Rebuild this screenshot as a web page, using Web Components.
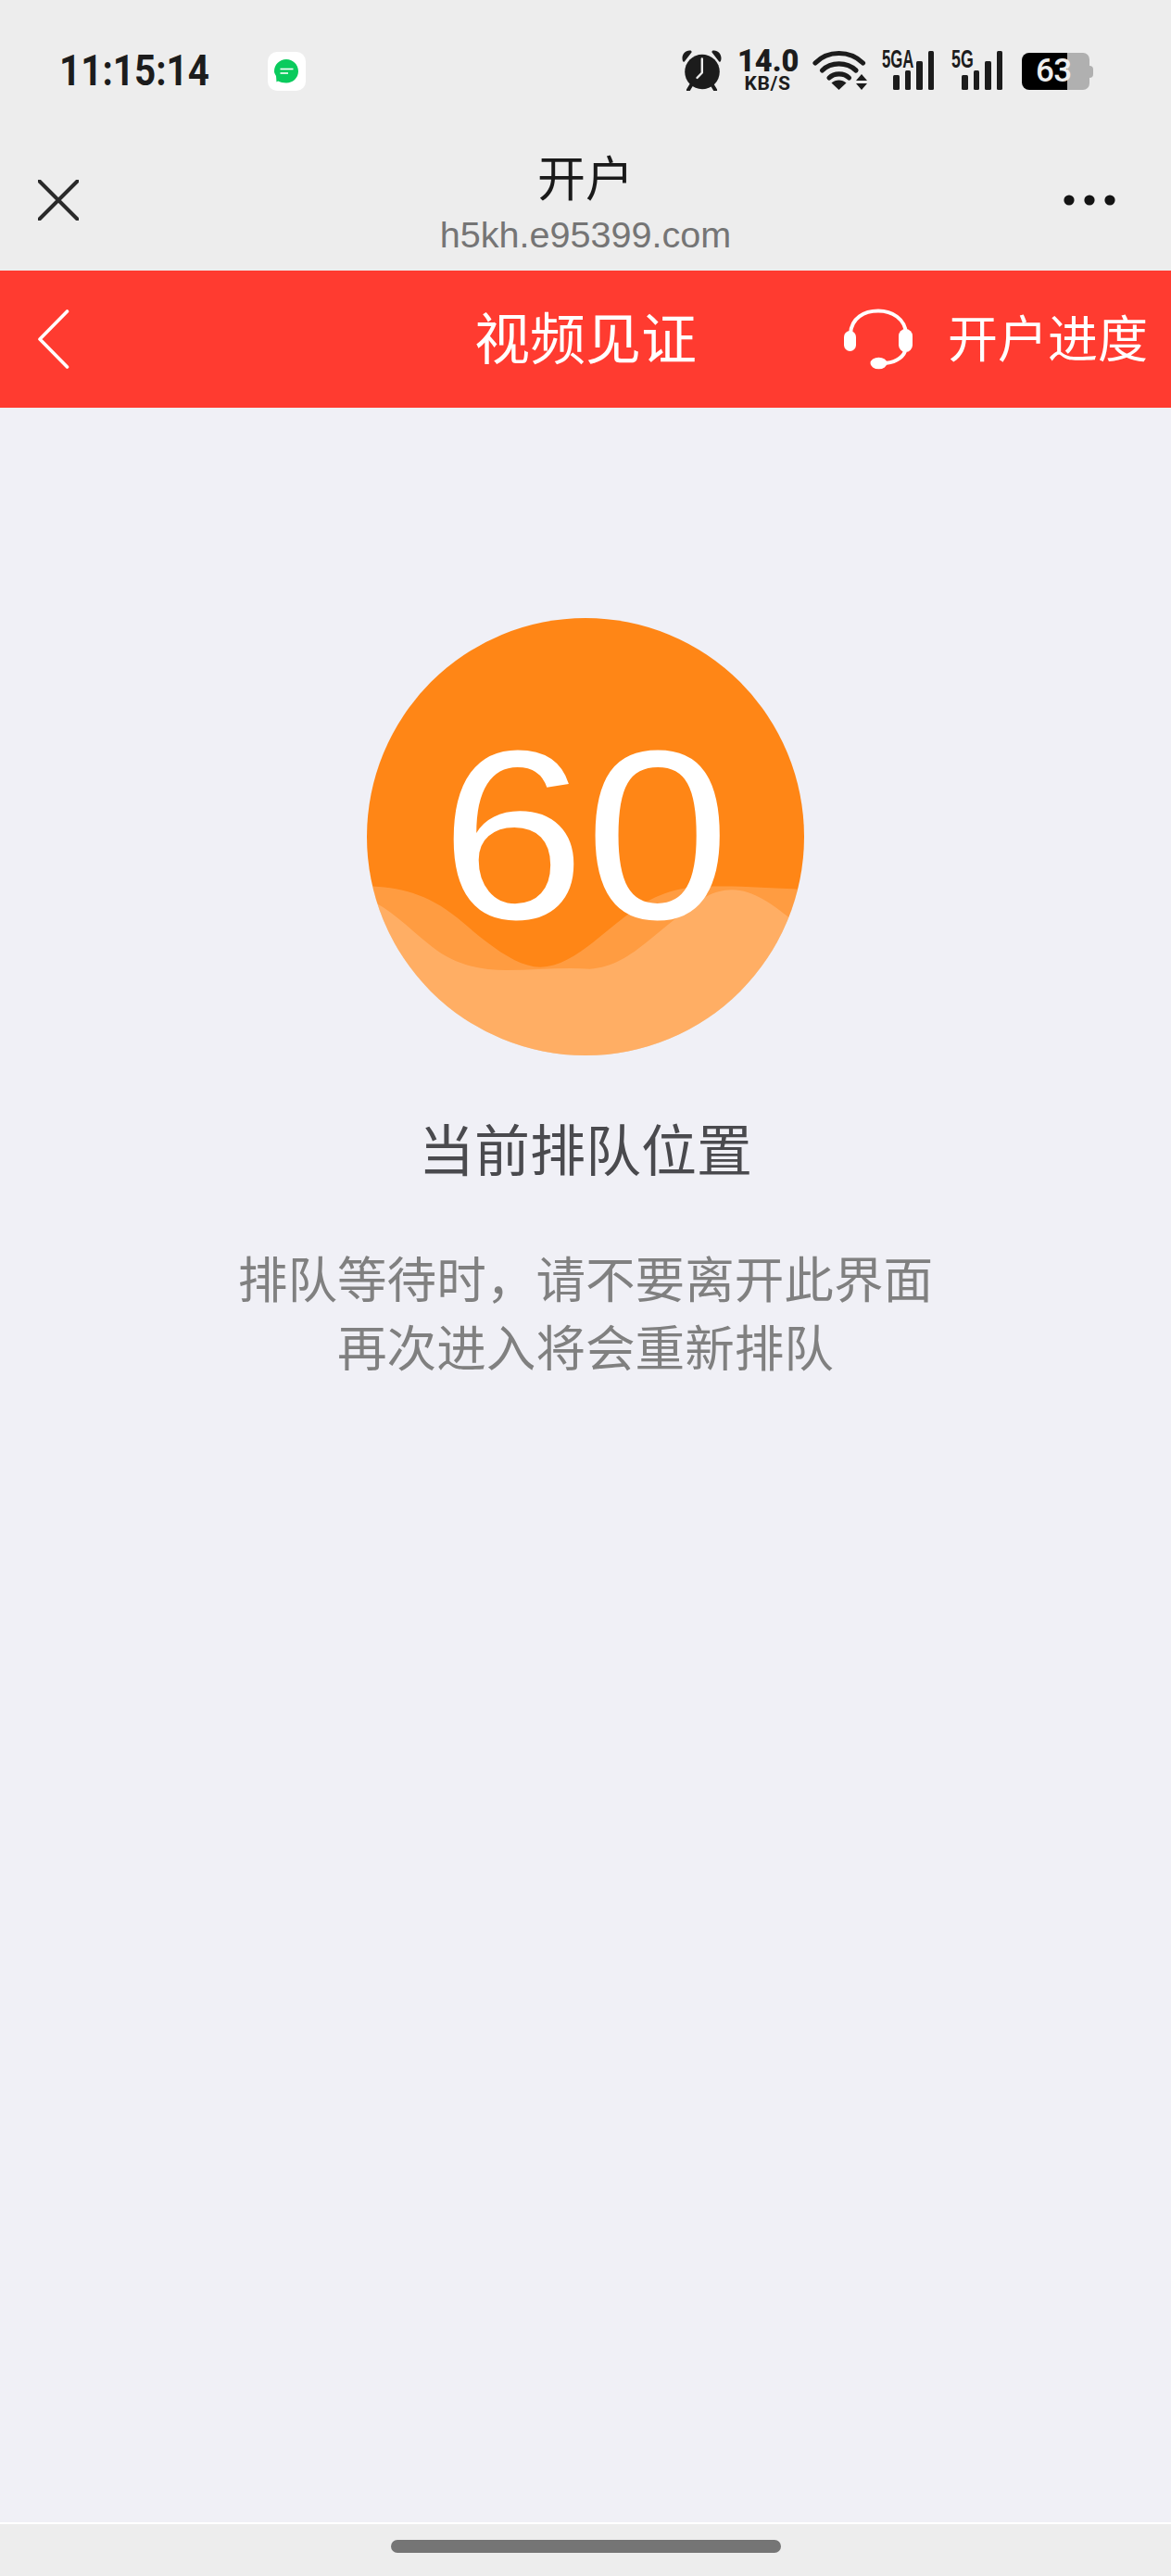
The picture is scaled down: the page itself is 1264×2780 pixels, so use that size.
<!DOCTYPE html>
<html lang="zh-CN">
<head>
<meta charset="utf-8">
<title>视频见证</title>
<style>
  html, body { margin: 0; padding: 0; background: #f0f0f6; }
</style>
</head>
<body>
<queue-page>
  <status-bar></status-bar>
  <app-nav title-text="开户" url="h5kh.e95399.com"></app-nav>
  <red-header title-text="视频见证" action="开户进度"></red-header>
  <queue-dial count="60"></queue-dial>
  <queue-message heading="当前排队位置">
    <span>排队等待时，请不要离开此界面</span>
    <span>再次进入将会重新排队</span>
  </queue-message>
  <home-indicator></home-indicator>
</queue-page>

<script>
const CJK = '"Noto Sans CJK SC", "Liberation Sans", sans-serif'

class QueuePage extends HTMLElement {
  constructor () {
    super()
    this.attachShadow({ mode: 'open' })
    this.shadowRoot.innerHTML = `
    <style>
      :host {
        display: flex;
        flex-direction: column;
        height: 2780px;
        background: #f0f0f6;
        overflow: hidden;
      }
      /* push the indicator down to the bottom of the window */
      ::slotted(home-indicator) { margin-top: auto; }
    </style>
    <slot></slot>`
  }
}

// One signal strength icon: network label over four rising bars
class SignalBars extends HTMLElement {
  constructor () {
    super()
    this.attachShadow({ mode: 'open' })
    const label = this.getAttribute('label')
    const scale = this.getAttribute('squeeze') || '.6'
    const indent = this.getAttribute('indent') || '12'
    this.shadowRoot.innerHTML = `
    <style>
      :host {
        display: grid;
        height: 44px;
        color: #1c1c1c;
      }
      .label, .bars { grid-area: 1 / 1; }
      .label {
        font: 700 27px/20px "Liberation Sans", sans-serif;
        transform: scaleX(${scale});
        transform-origin: left top;
        white-space: nowrap;
        height: 20px;
      }
      .bars {
        display: flex;
        align-items: flex-end;
        gap: 6px;
        padding-left: ${indent}px;
        padding-bottom: 1px;
      }
      .bars i { display: block; width: 6.5px; border-radius: 1.5px; background: #1c1c1c; }
    </style>
    <div class="bars">
      <i style="height:16px"></i><i style="height:21px"></i><i style="height:31px"></i><i style="height:42px"></i>
    </div>
    <div class="label">${label}</div>`
  }
}

class StatusBar extends HTMLElement {
  constructor () {
    super()
    this.attachShadow({ mode: 'open' })
    this.shadowRoot.innerHTML = `
    <style>
      :host {
        display: flex;
        align-items: flex-start;
        height: 150px;
        padding: 54px 84px 0 64px;
        box-sizing: border-box;
        background: #ededed;
        color: #1c1c1c;
      }
      .time {
        font: 700 47px/44px Roboto, sans-serif;
        width: 225px;
        transform: scaleX(.86);
        transform-origin: left center;
        white-space: nowrap;
      }
      .app {
        width: 41px;
        height: 42px;
        margin-top: 2px;
        display: block;
      }
      .right { display: flex; margin-left: auto; align-items: flex-start; }
      .speed {
        width: 65px;
        margin-left: 17px;
        text-align: center;
        font-family: Roboto, sans-serif;
        font-weight: 700;
      }
      .speed b { display: block; font-size: 32.500px; line-height: 24px; }
      .speed small { display: block; font-size: 21px; line-height: 18px; margin-top: 3px; letter-spacing: .6px; }
      signal-bars { width: 56px; }
      .battery {
        display: grid;
        width: 73px;
        height: 40px;
        margin: 3px 4px 0 21px;
        position: relative;
        border-radius: 8px 7px 7px 8px;
        background: linear-gradient(90deg, #000 49px, #b0b0b0 49px);
        color: #eee;
        font: 500 35px/40px Roboto, sans-serif;
        letter-spacing: -.6px;
        padding-left: 15px;
        box-sizing: border-box;
      }
      .battery::after {
        content: "";
        position: absolute;
        right: -4px;
        top: 14px;
        width: 4px;
        height: 13px;
        border-radius: 0 4px 4px 0;
        background: #b0b0b0;
      }
    </style>
    <div class="time">11:15:14</div>
    <svg class="app" viewBox="0 0 41 42">
      <rect width="41" height="42" rx="10" fill="#fff"/>
      <path d="M20 8C27 8 33 13.500 33 21C33 28 27 33.500 20 33.500C16.500 33.500 13.500 32.500 11 31.500L9.500 32.500L9 26C7.800 24 7 22.500 7 21C7 13.500 13 8 20 8Z" fill="#0acb5d"/>
      <path d="M13.500 18.500H27.500" stroke="#fff" stroke-width="1.600"/>
      <path d="M13.500 23H22" stroke="#fff" stroke-width="1.600"/>
    </svg>
    <div class="right">
      <svg width="43" height="44" viewBox="736 54 43 44">
        <path d="M737 66C735 60 739 54 745 54.500C746 54.500 747 55.500 746.500 56.500L738.800 66.500C738.200 67 737.300 66.800 737 66Z" fill="#1c1c1c"/>
        <path d="M778 66C780 60 776 54 770 54.500C769 54.500 768 55.500 768.500 56.500L776.200 66.500C776.800 67 777.700 66.800 778 66Z" fill="#1c1c1c"/>
        <circle cx="758" cy="77.500" r="18.800" fill="#1c1c1c"/>
        <path d="M746 92L743 97" stroke="#1c1c1c" stroke-width="4" stroke-linecap="round"/>
        <path d="M769 92L772 97" stroke="#1c1c1c" stroke-width="4" stroke-linecap="round"/>
        <path d="M757.800 63.500V78.500L752.500 84" stroke="#ededed" stroke-width="2.400" fill="none" stroke-linecap="round" stroke-linejoin="round"/>
      </svg>
      <div class="speed"><b>14.0</b><small>KB/S</small></div>
      <svg width="60" height="44" viewBox="877 54 60 44" style="margin-left:16px">
        <g fill="none" stroke="#1c1c1c" stroke-width="5.200" stroke-linecap="round">
          <path d="M880 68C893.500 54 917.500 54 931.500 68"/>
          <path d="M887.500 76C897 66.500 914 66.500 924 76"/>
          <path d="M895 84C900.500 78.500 911 78.500 916.500 84"/>
        </g>
        <path d="M905.500 97L897.500 89.500C902 85.500 909 85.500 913.500 89.500Z" fill="#1c1c1c"/>
        <path d="M930 80L936 87H924Z" fill="#1c1c1c"/>
        <path d="M930 97L936 90H924Z" fill="#1c1c1c"/>
      </svg>
      <signal-bars label="5GA" squeeze=".62" style="margin-left:15px"></signal-bars>
      <signal-bars label="5G" squeeze=".66" indent="11" style="margin-left:19px;width:55px"></signal-bars>
      <div class="battery">63</div>
    </div>`
  }
}

class AppNav extends HTMLElement {
  constructor () {
    super()
    this.attachShadow({ mode: 'open' })
    this.shadowRoot.innerHTML = `
    <style>
      :host {
        display: grid;
        grid-template-columns: minmax(0, 1fr) auto minmax(0, 1fr);
        align-items: center;
        height: 142px;
        padding: 0 41px 10px;
        box-sizing: border-box;
        background: #ededed;
      }
      svg { display: block; }
      .more { justify-self: end; margin-right: 19px; }
      .center { text-align: center; padding-top: 4px; }
      .title {
        font: 400 52px/60px ${CJK};
        color: #1a1a1a;
      }
      .url {
        margin-top: 10px;
        font: 400 39.600px/46px "Liberation Sans", sans-serif;
        color: #757575;
      }
    </style>
    <svg width="44" height="44" viewBox="0 0 44 44">
      <path d="M1.500 1.500L42.500 42.500M42.500 1.500L1.500 42.500" stroke="#2a2a2a" stroke-width="4" stroke-linecap="round"/>
    </svg>
    <div class="center">
      <div class="title">${this.getAttribute('title-text')}</div>
      <div class="url">${this.getAttribute('url')}</div>
    </div>
    <svg class="more" width="56" height="12" viewBox="0 0 56 12" fill="#141414">
      <circle cx="6" cy="6" r="5.600"/><circle cx="28" cy="6" r="5.600"/><circle cx="50" cy="6" r="5.600"/>
    </svg>`
  }
}

class RedHeader extends HTMLElement {
  constructor () {
    super()
    this.attachShadow({ mode: 'open' })
    this.shadowRoot.innerHTML = `
    <style>
      :host {
        display: grid;
        grid-template-columns: minmax(0, 1fr) auto minmax(0, 1fr);
        align-items: center;
        height: 148px;
        padding: 0 25px;
        box-sizing: border-box;
        background: #ff3b30;
        color: #fff;
      }
      svg { display: block; }
      .back { margin-left: 16px; }
      .title { font: 400 60px/80px ${CJK}; margin-bottom: 8px; }
      .action {
        display: flex;
        justify-content: flex-end;
        align-items: center;
        gap: 38px;
        font: 400 54px/70px ${CJK};
      }
      .action span { margin-bottom: 6px; }
    </style>
    <svg class="back" width="34" height="64" viewBox="0 0 34 64">
      <path d="M31.500 2L2 32L31.500 62" fill="none" stroke="#fff" stroke-width="3.600" stroke-linecap="round" stroke-linejoin="round"/>
    </svg>
    <div class="title">${this.getAttribute('title-text')}</div>
    <div class="action">
      <svg width="74" height="66" viewBox="0 0 74 66">
        <path d="M7 27C8 10 22 2.500 37 2.500C52 2.500 66 11 67 27" fill="none" stroke="#fff" stroke-width="4"/>
        <rect x="0" y="24" width="13" height="22" rx="6.500" fill="#fff"/>
        <rect x="59" y="22" width="15" height="25" rx="7.500" fill="#fff"/>
        <path d="M66 46C63 54 53 59 42 59" fill="none" stroke="#fff" stroke-width="4"/>
        <ellipse cx="37.500" cy="59" rx="9" ry="6.300" fill="#fff"/>
      </svg>
      <span>${this.getAttribute('action')}</span>
    </div>`
  }
}

// The orange circle with the queue position, waves drawn behind the number
class QueueDial extends HTMLElement {
  constructor () {
    super()
    this.attachShadow({ mode: 'open' })
    this.shadowRoot.innerHTML = `
    <style>
      :host {
        display: grid;
        width: 472px;
        height: 472px;
        margin: 227px auto 0;
        place-items: center;
      }
      svg, .count { grid-area: 1 / 1; }
      svg { display: block; }
      .count {
        font: 400 260px/468px "Liberation Sans", sans-serif;
        height: 468px;
        margin-bottom: 4px;
        color: #fff;
        transform: scaleX(1.08);
      }
    </style>
    <svg width="472" height="472" viewBox="48 50 1416 1416">
      <defs><clipPath id="disc"><circle cx="756" cy="758" r="708"/></clipPath></defs>
      <circle cx="756" cy="758" r="708" fill="#ff8616"/>
      <g clip-path="url(#disc)" fill="#fff" fill-opacity=".19">
        <path d="M0 918C120 915 230 930 340 1020C440 1105 530 1180 610 1180C700 1180 790 1090 880 1020C960 955 1030 925 1130 920C1250 915 1350 925 1500 930V1500H0Z"/>
        <path d="M40 955C120 985 190 1060 260 1115C330 1170 410 1190 500 1190C590 1190 680 1180 770 1186C870 1180 940 1110 1020 1045C1090 990 1150 930 1230 930C1300 930 1360 975 1440 1040L1500 1500H0Z"/>
      </g>
    </svg>
    <div class="count">${this.getAttribute('count')}</div>`
  }
}

class QueueMessage extends HTMLElement {
  constructor () {
    super()
    this.attachShadow({ mode: 'open' })
    this.shadowRoot.innerHTML = `
    <style>
      :host {
        display: block;
        text-align: center;
        margin-top: 56px;
      }
      h2 {
        margin: 0;
        font: 400 60px/86px ${CJK};
        color: #4a4a4e;
      }
      .hint {
        display: flex;
        flex-direction: column;
        margin-top: 60px;
        font: 400 53.600px/74px ${CJK};
        color: #808080;
      }
    </style>
    <h2>${this.getAttribute('heading')}</h2>
    <div class="hint"><slot></slot></div>`
  }
}

class HomeIndicator extends HTMLElement {
  constructor () {
    super()
    this.attachShadow({ mode: 'open' })
    this.shadowRoot.innerHTML = `
    <style>
      :host {
        display: block;
        height: 58px;
        padding-top: 17px;
        box-sizing: border-box;
        background: #ededed;
        border-top: 2px solid #fff;
      }
      div {
        width: 421px;
        height: 14px;
        margin: 0 auto;
        border-radius: 7px;
        background: #757575;
      }
    </style>
    <div></div>`
  }
}

customElements.define('queue-page', QueuePage)
customElements.define('signal-bars', SignalBars)
customElements.define('status-bar', StatusBar)
customElements.define('app-nav', AppNav)
customElements.define('red-header', RedHeader)
customElements.define('queue-dial', QueueDial)
customElements.define('queue-message', QueueMessage)
customElements.define('home-indicator', HomeIndicator)
</script>
</body>
</html>
